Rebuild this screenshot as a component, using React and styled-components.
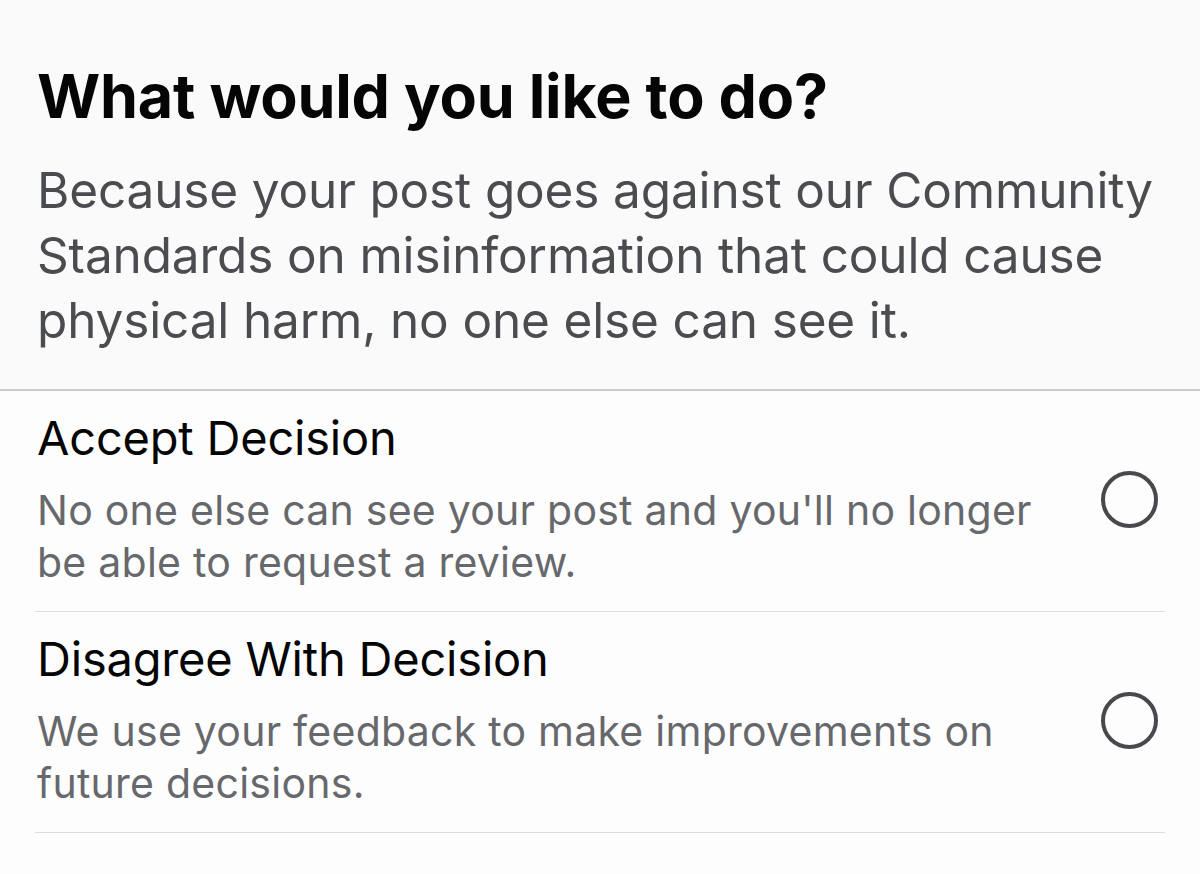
import React from "react";
import styled, { createGlobalStyle } from "styled-components";

const Global = createGlobalStyle`
  html, body { margin: 0; padding: 0; background: #fdfdfd; }
  body { font-family: Inter, "Noto Sans", "Liberation Sans", sans-serif; -webkit-font-smoothing: antialiased; }
  * { box-sizing: border-box; }
`;

const Page = styled.div`
  width: 1200px;
  height: 874px;
  overflow: hidden;
  background: #fdfdfd;
`;

const Header = styled.section`
  background: #fafafa;
  padding: 60px 37px 36px 37px;
  border-bottom: 2px solid #cbcbcb;
`;

const Title = styled.h1`
  margin: 0 0 26px 0;
  font-size: 61px;
  line-height: 72px;
  font-weight: 700;
  color: #050505;
  letter-spacing: -0.2px;
`;

const Lead = styled.p`
  margin: 0;
  font-size: 49.5px;
  line-height: 65px;
  font-weight: 400;
  color: #4b4c50;
  letter-spacing: -0.15px;
`;

const Options = styled.div`
  display: flex;
  flex-direction: column;
  padding: 0 35px;
`;

const Option = styled.label`
  display: flex;
  align-items: center;
  justify-content: space-between;
  gap: 40px;
  padding: 19px 0 23px 2px;
  border-bottom: 1px solid #dcdcdc;
  cursor: pointer;
`;

const OptionText = styled.div`
  display: flex;
  flex-direction: column;
  gap: 18px;
`;

const OptionTitle = styled.div`
  font-size: 47px;
  line-height: 56px;
  color: #050505;
  letter-spacing: -0.2px;
`;

const OptionDesc = styled.div`
  font-size: 41px;
  line-height: 52px;
  color: #67686c;
  letter-spacing: 0.25px;
`;

const Radio = styled.span`
  flex: none;
  width: 57px;
  height: 57px;
  border-radius: 50%;
  border: 4.5px solid #48494d;
  margin-right: 7px;
`;

const options = [
  {
    title: "Accept Decision",
    desc: "No one else can see your post and you'll no longer be able to request a review.",
  },
  {
    title: "Disagree With Decision",
    desc: "We use your feedback to make improvements on future decisions.",
  },
];

export default function App() {
  return (
    <Page>
      <Global />
      <Header>
        <Title>What would you like to do?</Title>
        <Lead>
          Because your post goes against our Community Standards on
          misinformation that could cause physical harm, no one else can see it.
        </Lead>
      </Header>
      <Options>
        {options.map((o) => (
          <Option key={o.title}>
            <OptionText>
              <OptionTitle>{o.title}</OptionTitle>
              <OptionDesc>{o.desc}</OptionDesc>
            </OptionText>
            <Radio />
          </Option>
        ))}
      </Options>
    </Page>
  );
}
